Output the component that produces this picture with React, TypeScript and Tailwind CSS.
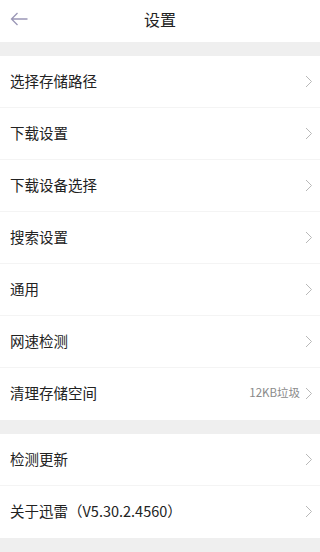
import React from "react";

const font = { fontFamily: '"Noto Sans CJK SC", "Noto Sans", sans-serif' };

function Chevron() {
  return (
    <svg width="8" height="13" viewBox="0 0 8 13" fill="none" className="shrink-0">
      <path d="M1 1l5.5 5.5L1 12" stroke="#b8b8b8" strokeWidth="1" />
    </svg>
  );
}

function Row({ label, extra, last }: { label: string; extra?: string; last?: boolean }) {
  return (
    <div className="flex h-[52px] items-center pl-[10px] pr-[7px] pb-[2px] relative bg-white">
      <span className="flex-1 text-[14.5px] text-[#222]">{label}</span>
      {extra && <span className="mr-[5px] text-[11.5px] text-[#8a8a8a]">{extra}</span>}
      <Chevron />
      {!last && <div className="absolute bottom-0 left-0 right-0 h-px bg-[#f4f4f4]" />}
    </div>
  );
}

export default function App() {
  return (
    <div className="w-[320px] h-[552px] bg-[#efefef] overflow-hidden" style={font}>
      <div className="h-[42px] bg-white flex items-center relative pb-[4px]">
        <svg className="absolute left-[10px] top-[12px]" width="18" height="14" viewBox="0 0 18 14" fill="none">
          <path d="M17.5 7H1.5M7.5 1L1.5 7l6 6" stroke="#9a97b6" strokeWidth="1.3" />
        </svg>
        <div className="flex-1 text-center text-[16px] text-[#222]">设置</div>
      </div>
      <div className="h-[14px]" />
      <Row label="选择存储路径" />
      <Row label="下载设置" />
      <Row label="下载设备选择" />
      <Row label="搜索设置" />
      <Row label="通用" />
      <Row label="网速检测" />
      <Row label="清理存储空间" extra="12KB垃圾" last />
      <div className="h-[14px]" />
      <Row label="检测更新" />
      <Row label="关于迅雷（V5.30.2.4560）" last />
    </div>
  );
}
